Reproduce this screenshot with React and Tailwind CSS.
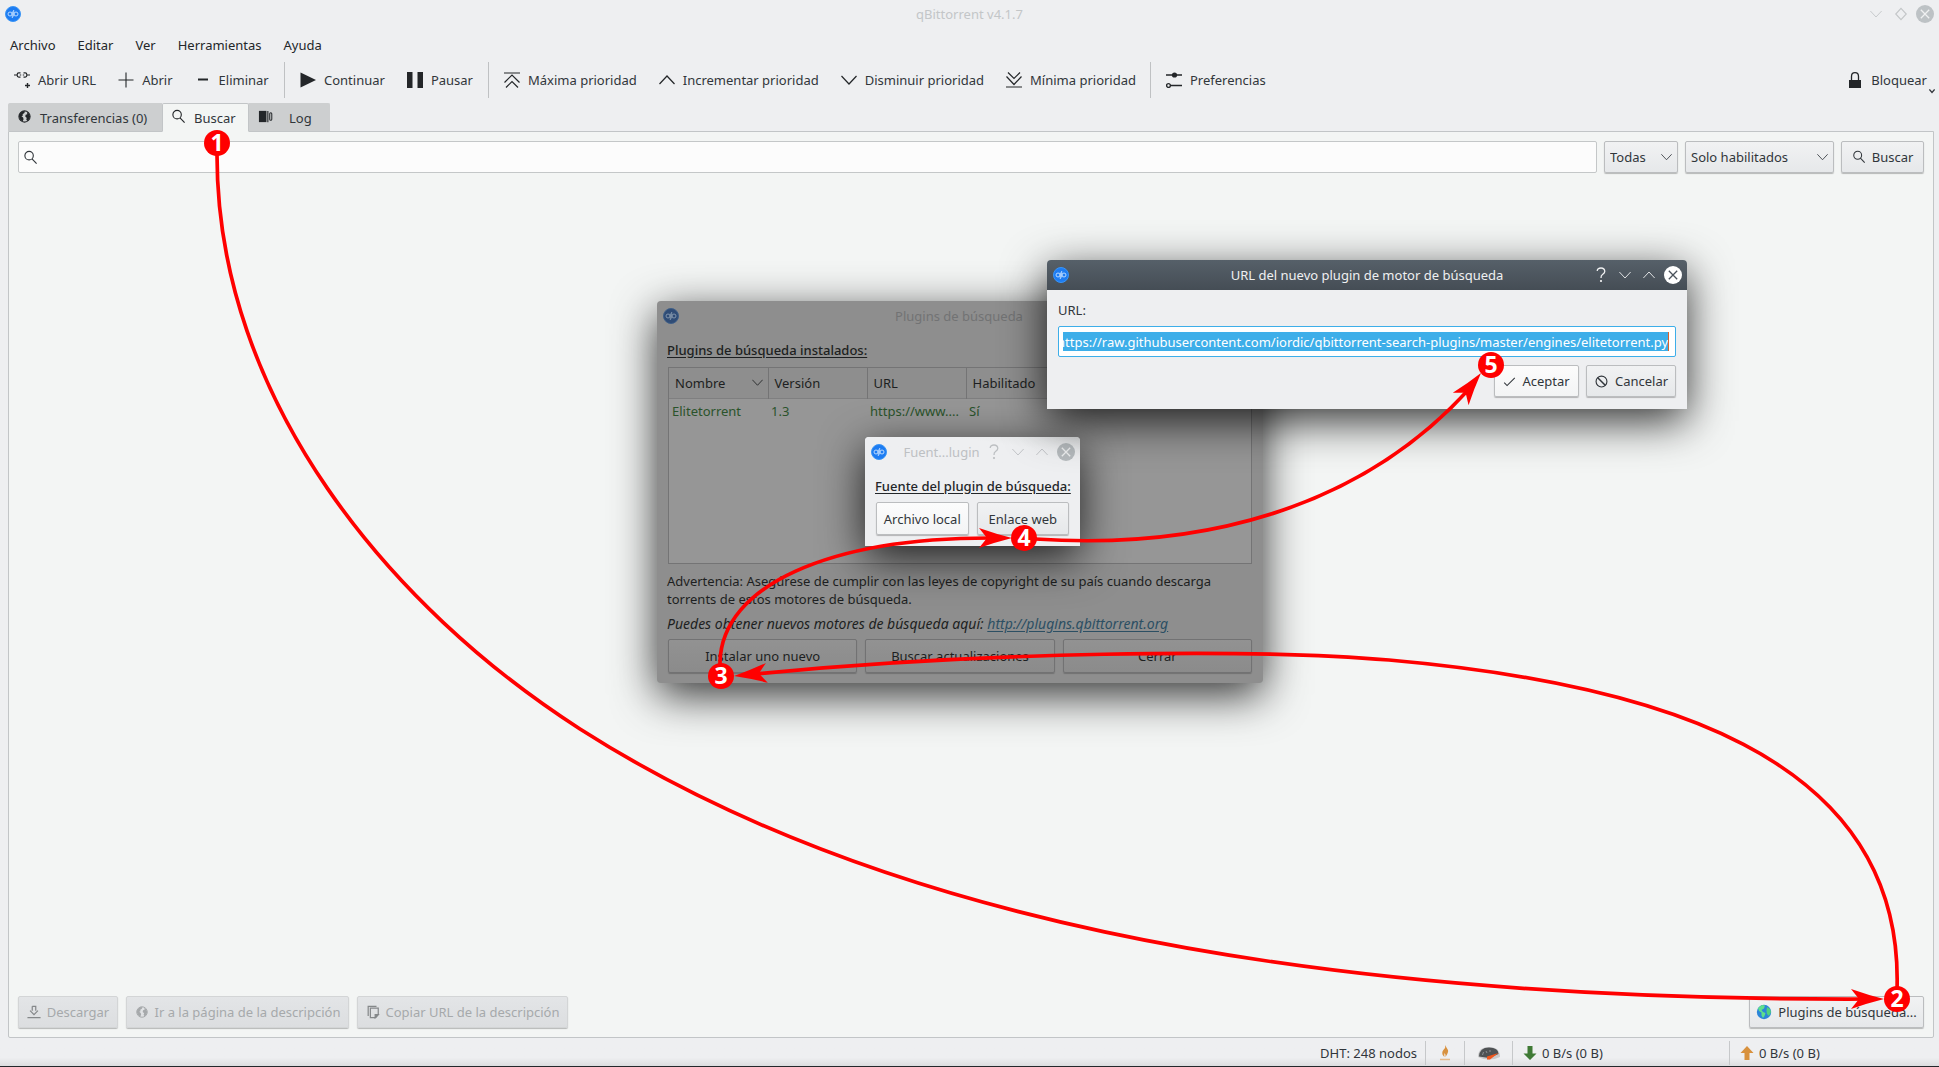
import { useEffect, useRef } from "react";

function Glyph({ size = 16, box = 16, className = "", children }) {
  return (
    <svg
      width={size}
      height={size}
      viewBox={`0 0 ${box} ${box}`}
      fill="none"
      stroke="currentColor"
      aria-hidden="true"
      className={`shrink-0 ${className}`}
    >
      {children}
    </svg>
  );
}

const icons = {
  link: (
    <g strokeWidth="1.200">
      <path d="M0 3h3M13 3h3M6.500 0.900H4.800Q3.200 0.900 3.200 2.400V3.600Q3.200 5.100 4.800 5.100H6.500M9.500 0.900h1.700Q12.800 0.900 12.800 2.400V3.600Q12.800 5.100 11.200 5.100H9.500" />
      <path d="M5.800 3h1.400M8.800 3h1.400" />
      <path d="M13.500 11v5M11 13.500h5" strokeWidth="1.400" />
    </g>
  ),
  plus: <path d="M8 0.500v15M0.500 8h15" strokeWidth="1.100" />,
  minus: <path d="M3 7.500h10" strokeWidth="2" />,
  play: <path d="M0.500 0.500L16 8L0.500 15.500z" fill="currentColor" stroke="none" />,
  pause: <path d="M0 0h5.500v16H0zM10.500 0H16v16h-5.500z" fill="currentColor" stroke="none" />,
  top: <path d="M0 1h16M0.500 10.500L8 3l7.500 7.500M2 15.500l6-6l6 6" strokeWidth="1.200" />,
  up: <path d="M0.500 12L8 4l7.500 8" strokeWidth="1.200" />,
  down: <path d="M0.500 4L8 12l7.500-8" strokeWidth="1.200" />,
  bottom: <path d="M0 15h16M0.500 4.500L8 12.500l7.500-8M2 0.500l6 6l6-6" strokeWidth="1.200" />,
  sliders: (
    <g strokeWidth="1.400">
      <path d="M0 3h16M5 13.500h11" />
      <circle cx="8.500" cy="3" r="2.600" fill="currentColor" stroke="none" />
      <circle cx="2.500" cy="13.500" r="1.900" />
    </g>
  ),
  lock: (
    <g>
      <rect x="2" y="8" width="12" height="8" fill="currentColor" stroke="none" />
      <path d="M4.500 8V4.500Q4.500 0.700 8 0.700T11.500 4.500V8" strokeWidth="1.300" />
    </g>
  ),
  search: (
    <g strokeWidth="1.200">
      <circle cx="6.500" cy="6" r="4.500" />
      <path d="M9.600 9.400L14.500 14.500" />
    </g>
  ),
  globe: (
    <g>
      <circle cx="8" cy="8" r="6" strokeWidth="1.100" />
      <path
        d="M2.200 6.500Q3.500 3 6.500 2.200L8.600 2.600L7.800 4.200L6 5.500L6.300 7L4.800 7.800L6.500 9L7 10.800L6 13.300Q2.800 12 2.200 8.500z"
        fill="currentColor"
        stroke="none"
      />
      <path
        d="M10.500 3Q13.500 4.500 14 8Q13.500 11.500 11 13L9.800 11L10.500 9.500L8.800 8L9.200 6L11 5.500z"
        fill="currentColor"
        stroke="none"
      />
    </g>
  ),
  log: (
    <g>
      <path d="M1 2h8v12H1z" fill="currentColor" stroke="none" />
      <path d="M10.500 2v12" strokeWidth="1.200" />
      <rect x="12.500" y="4" width="2.200" height="8" rx="1.100" strokeWidth="1.100" />
    </g>
  ),
  download: <path d="M0.500 14.500h15M6 1.500h4v5M6 1.500v5M3.500 6.500L8 11l4.500-4.500" strokeWidth="1.400" />,
  copy: (
    <g strokeWidth="1.400">
      <path d="M5 3.500h9V11L11 14.500H5zM2.500 12.500V1.500H12" />
      <path d="M10.500 14.500V11H14z" fill="currentColor" />
    </g>
  ),
  check: <path d="M1.500 9.500L5 13L14.500 3.500" strokeWidth="1.300" />,
  cancel: (
    <g strokeWidth="1.200">
      <circle cx="8" cy="8" r="5.800" />
      <path d="M4 4l8 8" strokeWidth="1.600" />
    </g>
  ),
};

function Icon({ name, size = 16, className = "" }) {
  return (
    <Glyph size={size} className={className}>
      {icons[name]}
    </Glyph>
  );
}

function AppLogo({ dim = false }) {
  return (
    <svg width="16" height="16" viewBox="0 0 16 16" fill="none" aria-hidden="true" className="shrink-0">
      <circle cx="8" cy="8" r="7.500" fill={dim ? "#2f4c76" : "#1d7cf2"} stroke={dim ? "#3f5f88" : "#3b95f5"} />
      <g stroke={dim ? "#8295ac" : "#b9d9ff"} strokeWidth="1">
        <circle cx="5" cy="8" r="2" />
        <circle cx="11" cy="8" r="2" />
        <path d="M7.300 5.500v6.500M8.700 4v6.500" />
      </g>
    </svg>
  );
}

function EarthIcon() {
  return (
    <svg width="16" height="16" viewBox="0 0 16 16" aria-hidden="true" className="shrink-0">
      <circle cx="8" cy="8" r="7.200" fill="#2c86d8" />
      <path d="M2 4l4-3l3 .5l-1 3l-2.500 1.500l1.500 2l2.500 1l-1 3l-1.500 2l-1.500-2.500V8.500L3 7z" fill="#5fe08a" />
      <path d="M11 3l3 2l1 3l-2 4l-2-2l-.5-3z" fill="#4fd27d" />
    </svg>
  );
}

function FlameIcon() {
  return (
    <svg width="12" height="16" viewBox="0 0 12 16" aria-hidden="true">
      <path d="M6.500 0Q7 2.500 8.500 4.200T8 9.500L6.500 12Q7 9.500 5.500 8Q5 10 5.500 12Q2.500 9.500 3.500 6.500Q4 5 5.200 4T6.500 0z" fill="#d8913e" />
      <path d="M1 14.500h10" stroke="#e5b98a" strokeWidth="1.500" />
    </svg>
  );
}

function GaugeIcon() {
  return (
    <svg width="24" height="16" viewBox="0 0 24 16" aria-hidden="true">
      <path d="M1 12Q1 2 12 2T23 12Q18 14.500 12 14.500T1 12z" fill="#c9cacb" />
      <path d="M2 11.500Q2.500 2.500 12 2.500T21.500 9L12 13z" fill="#4e5254" />
      <path d="M5.500 10l1-3M9 6l1 2M13 5v2" stroke="#8c9092" strokeWidth="1" />
      <path d="M10 11.500L21.500 8L13 14.500H10z" fill="#f0571d" />
    </svg>
  );
}

function SpeedArrow({ color, up }) {
  return (
    <svg width="14" height="16" viewBox="0 0 14 16" aria-hidden="true">
      <path
        d={up ? "M7 1L13.500 8H9.500V15H4.500V8H0.500z" : "M7 15L13.500 8.500H9.500V1H4.500V8.500H0.500z"}
        fill={color}
      />
    </svg>
  );
}

const buttonBase =
  "flex h-8 items-center justify-center gap-[6px] rounded-xs border whitespace-nowrap shadow-[0_1px_1px_rgba(0,0,0,0.25)]";

function Button({ icon, children, className = "", disabled = false }) {
  const look = disabled
    ? "border-[#d3d5d6] bg-linear-to-b from-[#e3e5e7] to-[#dcdee0] text-[#a6a9ab] shadow-[0_1px_1px_rgba(0,0,0,0.1)]"
    : "border-[#bbbdbf] bg-linear-to-b from-[#f1f2f3] to-[#e6e8ea]";
  return (
    <button type="button" disabled={disabled} className={`${buttonBase} ${look} ${className}`}>
      {icon}
      {children}
    </button>
  );
}

function ToolButton({ icon, children }) {
  return (
    <button type="button" className="flex h-9 items-center gap-2 whitespace-nowrap">
      <Icon name={icon} className="text-[#232629]" />
      {children}
    </button>
  );
}

function Select({ label, value, className }) {
  return (
    <div className={`relative ${className}`}>
      <select
        aria-label={label}
        defaultValue={value}
        className="h-8 w-full appearance-none rounded-xs border border-[#bbbdbf] bg-linear-to-b from-[#f1f2f3] to-[#e6e8ea] pl-[5px] shadow-[0_1px_1px_rgba(0,0,0,0.25)]"
      >
        <option>{value}</option>
      </select>
      <Icon name="down" size={11} className="pointer-events-none absolute top-1/2 right-[6px] -translate-y-1/2" />
    </div>
  );
}

function Tab({ icon, children, active = false, className = "" }) {
  return (
    <button
      type="button"
      role="tab"
      aria-selected={active}
      className={`flex items-center border ${
        active
          ? "-mb-px rounded-t-xs border-[#c2c5c7] border-b-[#f3f5f4] bg-[#f3f5f4]"
          : "border-[#cdcfd0] border-b-0 bg-[#cdcfd0]"
      } ${className}`}
    >
      <Icon name={icon} size={15} className="mb-[3px] text-[#232629]" />
      {children}
    </button>
  );
}

function CloseButton({ disc, cross }) {
  return (
    <button type="button" aria-label="Cerrar ventana">
      <svg width="18" height="18" viewBox="0 0 18 18" aria-hidden="true">
        <circle cx="9" cy="9" r="9" fill={disc} />
        <path d="M4.800 4.800l8.400 8.400M13.200 4.800l-8.400 8.400" stroke={cross} strokeWidth="1.300" />
      </svg>
    </button>
  );
}

function DialogControls({ disc, cross }) {
  return (
    <div className="flex items-center gap-3">
      <button type="button" aria-label="Ayuda" className="w-3">
        <svg width="12" height="16" viewBox="0 0 12 16" fill="none" stroke="currentColor" aria-hidden="true">
          <path d="M2.200 4Q2.500 1 6 1T9.800 4.300Q9.800 6 7.800 7.300T6 11" strokeWidth="1.300" />
          <circle cx="6" cy="14" r="0.700" fill="currentColor" />
        </svg>
      </button>
      <button type="button" aria-label="Minimizar">
        <Icon name="down" size={12} />
      </button>
      <button type="button" aria-label="Maximizar">
        <Icon name="up" size={12} />
      </button>
      <div className="-ml-[3px] flex">
        <CloseButton disc={disc} cross={cross} />
      </div>
    </div>
  );
}

function MainWindow() {
  return (
    <div className="flex min-h-screen flex-col border-b border-[#23272b] bg-[#eeeff1]">
      <header className="grid h-7 grid-cols-[1fr_auto_1fr] items-center px-[5px]">
        <AppLogo />
        <h1 className="text-[#c3c6c8]">qBittorrent v4.1.7</h1>
        <div className="flex items-center justify-end gap-3 text-[#c3c6c8]">
          <button type="button" aria-label="Minimizar">
            <Icon name="down" size={12} />
          </button>
          <button type="button" aria-label="Restaurar">
            <Glyph size={14}>
              <path d="M8 1.500L14 8L8 14.500L2 8z" strokeWidth="1.300" />
            </Glyph>
          </button>
          <div className="-ml-1 flex">
            <CloseButton disc="#bdc2c5" cross="#eff0f1" />
          </div>
        </div>
      </header>

      <nav className="flex h-8 items-center gap-[22px] pt-0.5 pl-[10px] text-[#232629]">
        {["Archivo", "Editar", "Ver", "Herramientas", "Ayuda"].map((item) => (
          <button type="button" key={item}>
            {item}
          </button>
        ))}
      </nav>

      <div className="flex items-center pt-0.5 pr-3 pl-[14px]">
        <div className="flex h-9 w-[271px] items-center gap-[22px] border-r border-[#bfc1c3]">
          <ToolButton icon="link">Abrir URL</ToolButton>
          <ToolButton icon="plus">Abrir</ToolButton>
          <ToolButton icon="minus">Eliminar</ToolButton>
        </div>
        <div className="flex h-9 w-[204px] items-center gap-[22px] border-r border-[#bfc1c3] pl-[15px]">
          <ToolButton icon="play">Continuar</ToolButton>
          <ToolButton icon="pause">Pausar</ToolButton>
        </div>
        <div className="flex h-9 w-[662px] items-center gap-[22px] border-r border-[#bfc1c3] pl-[15px]">
          <ToolButton icon="top">Máxima prioridad</ToolButton>
          <ToolButton icon="up">Incrementar prioridad</ToolButton>
          <ToolButton icon="down">Disminuir prioridad</ToolButton>
          <ToolButton icon="bottom">Mínima prioridad</ToolButton>
        </div>
        <div className="pl-[15px]">
          <ToolButton icon="sliders">Preferencias</ToolButton>
        </div>
        <div className="relative ml-auto">
          <ToolButton icon="lock">Bloquear</ToolButton>
          <Glyph size={6} className="absolute -right-2 bottom-1">
            <path d="M1 4l7 8l7-8" strokeWidth="3.500" />
          </Glyph>
        </div>
      </div>

      <div role="tablist" className="mt-1 flex h-[29px] pt-px pl-2">
        <Tab icon="globe" className="w-[154px] gap-2 rounded-tl-xs pl-2">
          Transferencias (0)
        </Tab>
        <Tab icon="search" active className="z-10 w-[87px] gap-2 pl-2">
          Buscar
        </Tab>
        <Tab icon="log" className="w-[81px] gap-4 rounded-tr-xs pl-2">
          Log
        </Tab>
      </div>

      <main className="mr-[5px] ml-2 flex flex-1 flex-col justify-between rounded-b-xs border border-[#c2c5c7] bg-[#f3f5f4] p-[9px]">
        <form className="flex items-center gap-[7px]" onSubmit={(event) => event.preventDefault()}>
          <label className="flex h-8 flex-1 items-center gap-2 rounded-xs border border-[#c4c7c8] bg-[#fcfcfc] pl-1">
            <Icon name="search" size={15} />
            <input aria-label="Texto de búsqueda" className="h-full flex-1 bg-transparent outline-none" />
          </label>
          <Select label="Categoría" value="Todas" className="w-[74px]" />
          <Select label="Motores de búsqueda" value="Solo habilitados" className="w-[149px]" />
          <Button icon={<Icon name="search" size={14} />} className="w-[83px]">
            Buscar
          </Button>
        </form>

        <div className="flex items-center gap-2">
          <Button disabled icon={<Icon name="download" size={14} className="text-[#85888a]" />} className="w-[100px]">
            Descargar
          </Button>
          <Button disabled icon={<Icon name="globe" size={14} />} className="w-[223px]">
            Ir a la página de la descripción
          </Button>
          <Button disabled icon={<Icon name="copy" size={14} className="text-[#85888a]" />} className="w-[211px]">
            Copiar URL de la descripción
          </Button>
          <Button icon={<EarthIcon />} className="ml-auto w-[175px]">
            Plugins de búsqueda...
          </Button>
        </div>
      </main>

      <footer className="flex h-7 items-center justify-end bg-linear-to-b from-[#eeeff1] from-70% to-[#dcdddf] pt-0.5">
        <span className="pr-2">DHT: 248 nodos</span>
        <span className="flex h-6 w-[39px] items-center justify-center border-l border-[#c6c8ca]">
          <FlameIcon />
        </span>
        <span className="flex h-6 w-12 items-center justify-center border-l border-[#c6c8ca]">
          <GaugeIcon />
        </span>
        <span className="flex h-6 w-[217px] items-center gap-[5px] border-l border-[#c6c8ca] pl-[10px]">
          <SpeedArrow color="#3f7a35" />0 B/s (0 B)
        </span>
        <span className="flex h-6 w-[210px] items-center gap-[5px] border-l border-[#c6c8ca] pl-[10px]">
          <SpeedArrow color="#d8913e" up />0 B/s (0 B)
        </span>
      </footer>
    </div>
  );
}

const dimButton =
  "h-[34px] flex-1 rounded-xs border border-[#727273] bg-linear-to-b from-[#929292] to-[#8b8b8b] shadow-[0_1px_1px_rgba(0,0,0,0.2)]";

function PluginsDialog() {
  return (
    <section
      aria-label="Plugins de búsqueda"
      className="absolute top-[301px] left-[657px] w-[606px] rounded-sm bg-[#8e8e8e] pb-[10px] text-[#1d1f21] shadow-[0_12px_44px_0_rgba(0,0,0,0.8)]"
    >
      <header className="flex h-[30px] items-center px-[6px]">
        <AppLogo dim />
        <h2 className="flex-1 pr-[18px] text-center text-[#727374]">Plugins de búsqueda</h2>
      </header>
      <div className="px-[11px]">
        <div className="-ml-px pt-[10px] leading-[18px] font-medium underline underline-offset-2">
          Plugins de búsqueda instalados:
        </div>
        <div className="mt-2 h-[197px] border border-[#747475] bg-[#969696]">
          <table className="w-full table-fixed text-left">
            <thead>
              <tr className="h-[30px] border-b border-[#7f7f80] bg-[#8e8e8e]">
                <th className="w-[99px] border-r border-[#747475] pl-[6px] font-normal">
                  <span className="flex items-center justify-between pr-[5px]">
                    Nombre <Icon name="down" size={11} />
                  </span>
                </th>
                <th className="w-[99px] border-r border-[#747475] pl-[6px] font-normal">Versión</th>
                <th className="w-[99px] border-r border-[#747475] pl-[6px] font-normal">URL</th>
                <th className="pl-[6px] font-normal">Habilitado</th>
              </tr>
            </thead>
            <tbody>
              <tr className="h-[26px] text-[#2a532b]">
                <td className="pl-[3px]">Elitetorrent</td>
                <td className="pl-[3px]">1.3</td>
                <td className="pl-[3px]">https://www....</td>
                <td className="pl-[3px]">Sí</td>
              </tr>
            </tbody>
          </table>
        </div>
        <p className="-ml-px pt-2 leading-[18px]">
          Advertencia: Asegúrese de cumplir con las leyes de copyright de su país cuando descarga
          <br />
          torrents de estos motores de búsqueda.
        </p>
        <p className="-ml-px pt-[7px] text-sm leading-[18px] whitespace-nowrap italic">
          Puedes obtener nuevos motores de búsqueda aquí:{" "}
          <a href="http://plugins.qbittorrent.org" className="text-[#2c4f63] underline underline-offset-2">
            http://plugins.qbittorrent.org
          </a>
        </p>
        <div className="flex gap-2 pt-[6px]">
          <button type="button" className={dimButton}>
            Instalar uno nuevo
          </button>
          <button type="button" className={dimButton}>
            Buscar actualizaciones
          </button>
          <button type="button" className={dimButton}>
            Cerrar
          </button>
        </div>
      </div>
    </section>
  );
}

function SourceDialog() {
  return (
    <section
      aria-label="Fuente del plugin"
      className="absolute top-[437px] left-[865px] w-[215px] rounded-t-sm bg-[#eeeff1] pb-[11px] shadow-[0_12px_44px_0_rgba(0,0,0,0.8)]"
    >
      <header className="flex h-[30px] items-center justify-between rounded-t-sm bg-linear-to-bl from-[#e2e4e5] to-[#eeeff1] to-30% pr-[5px] pl-[6px] text-[#bdc0c3]">
        <AppLogo />
        <h2 className="pl-2">Fuent...lugin</h2>
        <DialogControls disc="#b6bbbe" cross="#eff0f1" />
      </header>
      <div className="px-[11px]">
        <div className="-ml-px pt-[10px] leading-[18px] font-medium whitespace-nowrap text-[#232629] underline underline-offset-2">
          Fuente del plugin de búsqueda:
        </div>
        <div className="flex gap-2 pt-[7px]">
          <button
            type="button"
            className="h-[33px] flex-1 rounded-xs border border-[#bbbdbf] bg-linear-to-b from-[#fcfcfc] to-[#f3f4f5] shadow-[0_1px_1px_rgba(0,0,0,0.25)]"
          >
            Archivo local
          </button>
          <button
            type="button"
            className="h-[33px] flex-1 rounded-xs border border-[#bbbdbf] bg-linear-to-b from-[#f1f2f3] to-[#e6e8ea] shadow-[0_1px_1px_rgba(0,0,0,0.25)]"
          >
            Enlace web
          </button>
        </div>
      </div>
    </section>
  );
}

function UrlDialog() {
  const field = useRef(null);
  useEffect(() => {
    field.current.scrollLeft = field.current.scrollWidth;
  }, []);
  return (
    <section
      aria-label="URL del nuevo plugin de motor de búsqueda"
      className="absolute top-[260px] left-[1047px] w-[640px] rounded-t-sm bg-[#eeeff1] pb-3 shadow-[0_12px_44px_0_rgba(0,0,0,0.8)]"
    >
      <header className="flex h-[30px] items-center rounded-t-sm bg-linear-to-b from-[#566069] to-[#454d55] pr-[5px] pl-[6px] text-[#eff0f1]">
        <AppLogo />
        <h2 className="flex-1 pl-[70px] text-center">URL del nuevo plugin de motor de búsqueda</h2>
        <DialogControls disc="#ffffff" cross="#4a525b" />
      </header>
      <div className="px-[11px] pt-[11px]">
        <label htmlFor="plugin-url" className="block leading-[18px]">
          URL:
        </label>
        <div className="mt-[7px] flex h-[31px] items-center rounded-xs border border-[#3daee9] bg-white pr-[6px] pl-1">
          <input
            id="plugin-url"
            ref={field}
            defaultValue="https://raw.githubusercontent.com/iordic/qbittorrent-search-plugins/master/engines/elitetorrent.py"
            className="h-[19px] w-full border-r border-[#d9622b] bg-[#3daee9] p-0 text-white outline-none"
          />
        </div>
        <div className="flex justify-end gap-[7px] pt-2">
          <button
            type="button"
            className="flex h-8 w-[85px] items-center justify-center gap-[6px] rounded-xs border border-[#bbbdbf] bg-linear-to-b from-[#fcfcfc] to-[#f3f4f5] shadow-[0_1px_1px_rgba(0,0,0,0.25)]"
          >
            <Icon name="check" size={13} />
            Aceptar
          </button>
          <Button icon={<Icon name="cancel" size={15} />} className="w-[90px]">
            Cancelar
          </Button>
        </div>
      </div>
    </section>
  );
}

const arrowHead = "M0 0Q-16 -4 -33 -10L-25 0L-33 10Q-16 4 0 0z";

const routes = [
  {
    line: "M217 143V155C217 400 390 607 580 729C860 908 1270 1001 1866 999",
    head: "translate(1884 999)",
  },
  {
    line: "M1897 990C1905 752 1649 683 1389 660C1250 648 980 652 755 674",
    head: "translate(734 676) rotate(174.500)",
  },
  { line: "M720 670V662C722 585 830 538 990 538", head: "translate(1012 538)" },
  { line: "M1035 539C1200 550 1360 510 1470 388", head: "translate(1481 373) rotate(-52)" },
];

const steps = [
  { n: 1, x: 217, y: 143 },
  { n: 2, x: 1897, y: 999 },
  { n: 3, x: 721, y: 676 },
  { n: 4, x: 1024, y: 538 },
  { n: 5, x: 1491, y: 365 },
];

function StepsOverlay() {
  return (
    <svg
      width="1939"
      height="1067"
      viewBox="0 0 1939 1067"
      className="pointer-events-none absolute top-0 left-0 z-20"
      role="img"
      aria-label="Pasos 1 a 5"
    >
      {routes.map((route) => (
        <g key={route.head}>
          <path d={route.line} fill="none" stroke="#ff0000" strokeWidth="3.700" />
          <path d={arrowHead} transform={route.head} fill="#ff0000" />
        </g>
      ))}
      {steps.map((step) => (
        <g key={step.n}>
          <circle cx={step.x} cy={step.y} r="13" fill="#ff0000" />
          <text x={step.x} y={step.y + 8} textAnchor="middle" fill="#ffffff" className="text-[23px] font-bold">
            {step.n}
          </text>
        </g>
      ))}
    </svg>
  );
}

export default function App() {
  return (
    <div className="relative overflow-hidden font-['Noto_Sans',sans-serif] text-[13px] leading-5 text-[#31363b]">
      <MainWindow />
      <PluginsDialog />
      <SourceDialog />
      <UrlDialog />
      <StepsOverlay />
    </div>
  );
}
